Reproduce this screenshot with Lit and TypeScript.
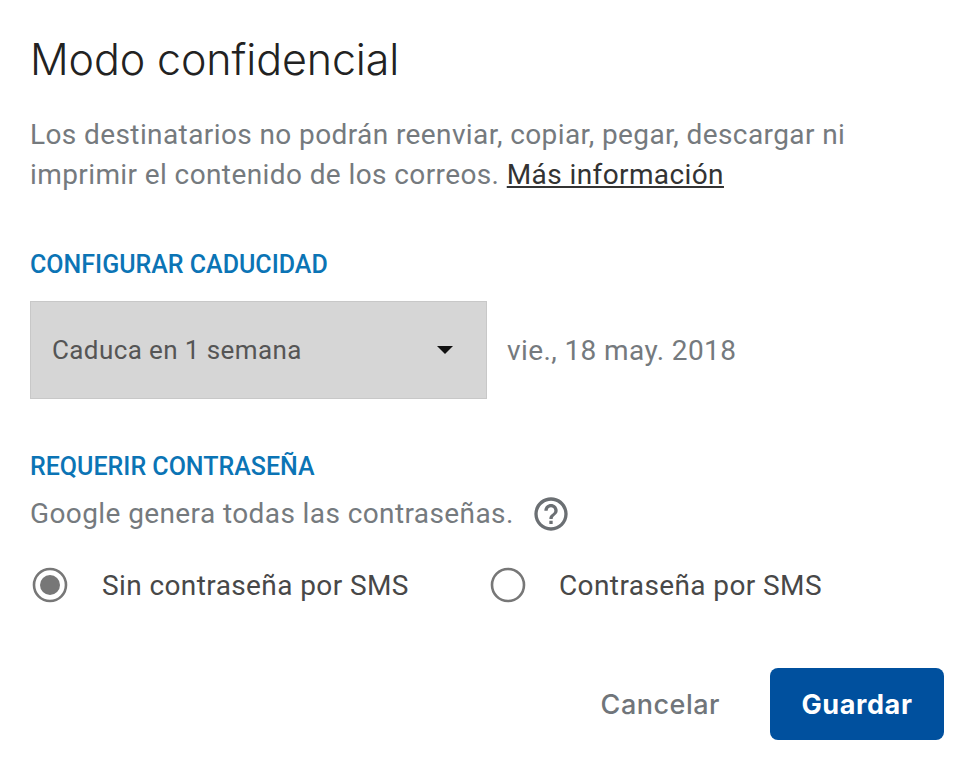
import { LitElement, html, css } from "lit";
import { customElement } from "lit/decorators.js";

@customElement("app-root")
export class AppRoot extends LitElement {
  static styles = css`
    :host { display: block; width: 980px; height: 781px; background: #fff; font-family: Roboto, "Noto Sans", sans-serif; overflow: hidden; }
    .dialog { box-sizing: border-box; width: 980px; height: 781px; padding: 33px 36px 0 30px; display: flex; flex-direction: column; }
    h1 { margin: 0; font: 300 43px/52px Inter, sans-serif; color: #222; letter-spacing: -0.12px; }
    .desc { margin: 30px 0 0; font-size: 28px; letter-spacing: 0.4px; line-height: 40px; color: #757a7e; }
    .desc a { color: #333; text-decoration: underline; }
    .label { font-size: 25px; font-weight: 500; line-height: 30px; color: #0b74b5; }
    .l1 { margin-top: 55px; }
    .expiry { display: flex; align-items: center; margin-top: 21px; gap: 20px; }
    .select { box-sizing: border-box; width: 457px; height: 98px; background: #d6d6d6; border: 1px solid #c8c8c8; display: flex; align-items: center; justify-content: space-between; padding: 0 33px 0 21px; font-size: 26px; letter-spacing: 0.4px; color: #555; }
    .arrow { width: 0; height: 0; border-left: 8px solid transparent; border-right: 8px solid transparent; border-top: 8px solid #111; }
    .date { font-size: 28px; letter-spacing: 0.4px; color: #757a7e; }
    .l2 { margin-top: 53px; }
    .hint { display: flex; align-items: center; gap: 17px; margin-top: 12px; font-size: 28px; letter-spacing: 0.4px; line-height: 40px; color: #757a7e; }
    .radios { display: flex; margin: 33px 0 0 2px; align-items: center; font-size: 28px; letter-spacing: 0.4px; color: #484848; }
    .radio { display: flex; align-items: center; }
    .r1 { gap: 34px; width: 458px; }
    .r2 { gap: 33px; }
    .actions { display: flex; justify-content: flex-end; align-items: center; margin-top: 65px; gap: 50px; font-family: Inter, sans-serif; }
    .cancel { font-size: 27px; letter-spacing: 0.5px; font-weight: 500; color: #70757a; }
    .save { width: 174px; height: 72px; background: #00509e; color: #fff; border-radius: 8px; display: flex; align-items: center; justify-content: center; font-size: 27px; letter-spacing: 0.6px; font-weight: 700; }
  `;
  render() {
    return html`<div class="dialog">
      <h1>Modo confidencial</h1>
      <p class="desc">Los destinatarios no podrán reenviar, copiar, pegar, descargar ni<br>imprimir el contenido de los correos. <a>Más información</a></p>
      <div class="label l1">CONFIGURAR CADUCIDAD</div>
      <div class="expiry">
        <div class="select"><span>Caduca en 1 semana</span><span class="arrow"></span></div>
        <span class="date">vie., 18 may. 2018</span>
      </div>
      <div class="label l2">REQUERIR CONTRASEÑA</div>
      <div class="hint"><span>Google genera todas las contraseñas.</span>
        <svg width="40" height="40" viewBox="0 0 24 24" fill="#6b6f73"><path d="M11 18h2v-2h-2v2zm1-16C6.48 2 2 6.48 2 12s4.48 10 10 10 10-4.48 10-10S17.52 2 12 2zm0 18c-4.41 0-8-3.59-8-8s3.59-8 8-8 8 3.59 8 8-3.59 8-8 8zm0-14c-2.21 0-4 1.79-4 4h2c0-1.1.9-2 2-2s2 .9 2 2c0 2-3 1.75-3 5h2c0-2.25 3-2.5 3-5 0-2.21-1.79-4-4-4z"/></svg>
      </div>
      <div class="radios">
        <div class="radio r1"><svg width="36" height="36" viewBox="0 0 36 36"><circle cx="18" cy="18" r="16" fill="none" stroke="#777" stroke-width="2.6"/><circle cx="18" cy="18" r="10" fill="#777"/></svg><span>Sin contraseña por SMS</span></div>
        <div class="radio r2"><svg width="36" height="36" viewBox="0 0 36 36"><circle cx="18" cy="18" r="16" fill="none" stroke="#777" stroke-width="2.6"/></svg><span>Contraseña por SMS</span></div>
      </div>
      <div class="actions"><span class="cancel">Cancelar</span><div class="save">Guardar</div></div>
    </div>`;
  }
}
